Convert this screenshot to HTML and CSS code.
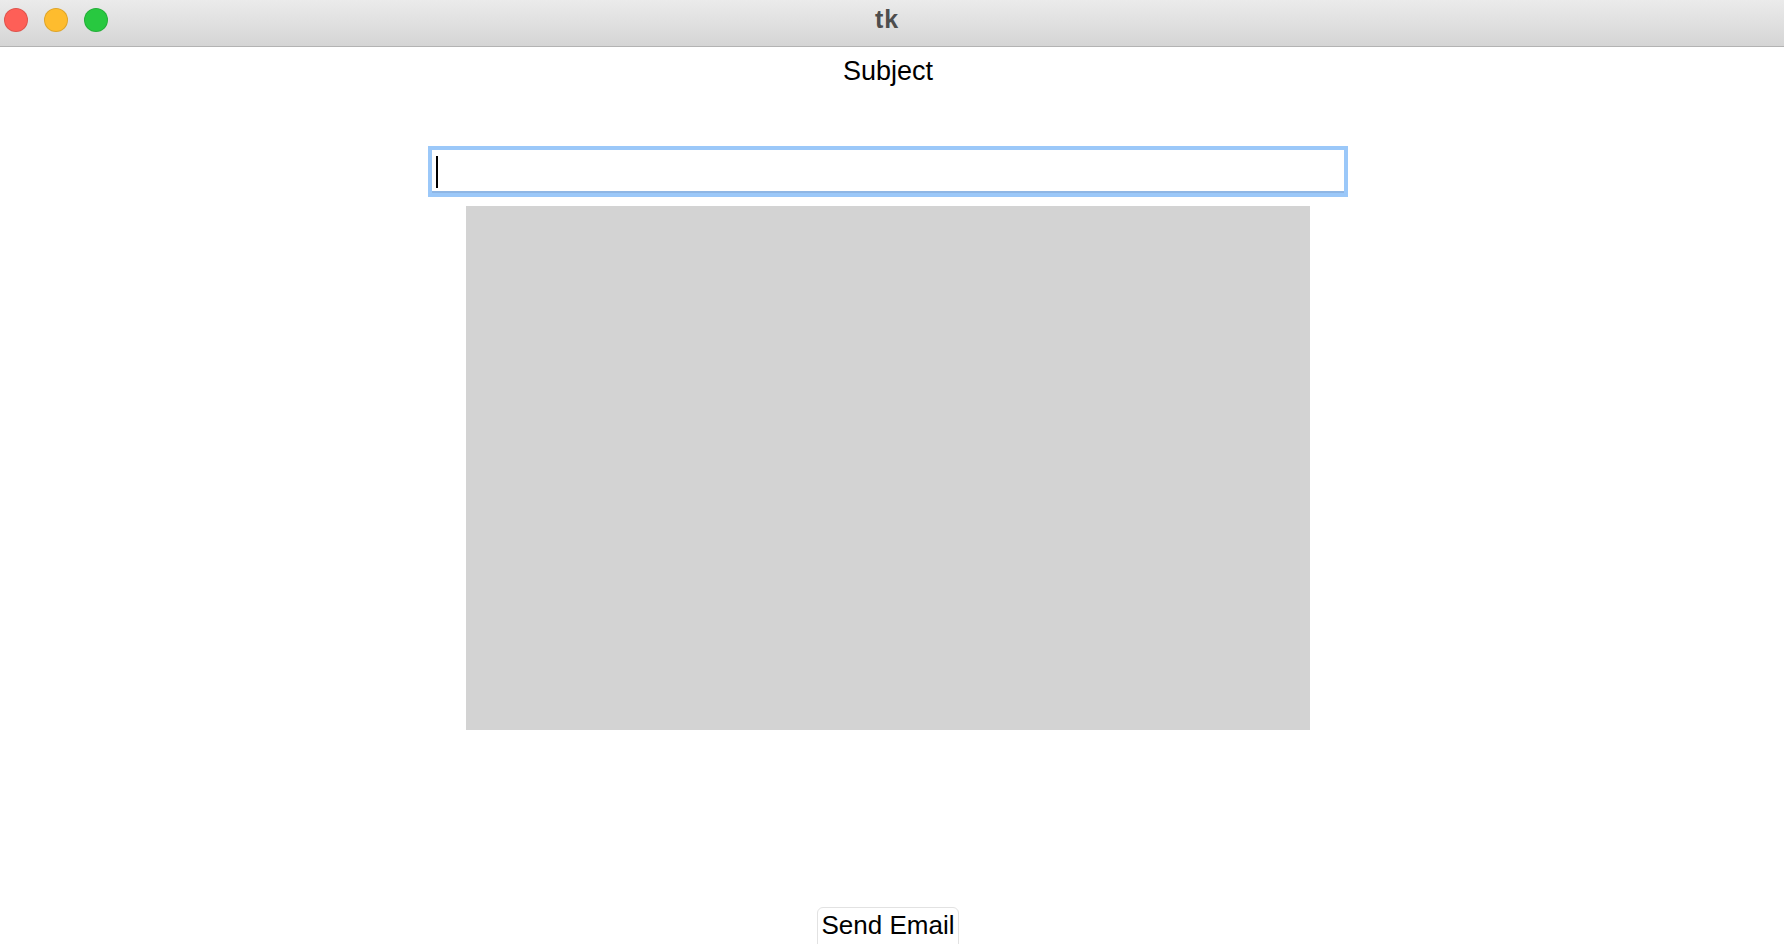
FILE: index.html
```html
<!DOCTYPE html>
<html lang="en">

<head>
  <meta charset="UTF-8" />
  <meta name="viewport" content="width=device-width, initial-scale=1.0" />
  <title>tk</title>
  <link rel="stylesheet" href="styles.css">
</head>

<body>

  <header class="titlebar">
    <div class="lights">
      <span class="light red"></span>
      <span class="light yellow"></span>
      <span class="light green"></span>
    </div>
    <div class="title">tk</div>
  </header>

  <main class="window">
    <label class="subject-label" for="subject">Subject</label>
    <div class="subject-box">
      <span class="caret"></span>
    </div>
    <div class="body-area"></div>
    <button class="send">Send Email</button>
  </main>

</body>

</html>
```

FILE: styles.css
```css
html,
body {
  height: 100%;
}

body {
  margin: 0;
  font-family: 'Liberation Sans', Arial, sans-serif;
  background: #fff;
  color: #000;
  overflow: hidden;
}

.titlebar {
  position: relative;
  height: 46px;
  padding-right: 10px;
  background: linear-gradient(#ebebeb, #d5d5d5);
  border-bottom: 1px solid #b3b3b3;
  display: flex;
  align-items: center;
  justify-content: center;
}

.lights {
  position: absolute;
  left: 4px;
  top: 8px;
  display: flex;
  gap: 16px;
}

.light {
  width: 22px;
  height: 22px;
  border-radius: 50%;
  border: 1px solid rgba(0, 0, 0, 0.12);
}

.light.red {
  background: #fe5f57;
}

.light.yellow {
  background: #febc2e;
}

.light.green {
  background: #28c840;
}

.title {
  font-weight: 700;
  font-size: 25px;
  letter-spacing: 1px;
  color: #4d4d4d;
  margin-top: -7px;
}

.window {
  display: flex;
  flex-direction: column;
  align-items: center;
  padding-right: 8px;
}

.subject-label {
  margin-top: 9px;
  font-size: 27px;
  line-height: 31px;
}

.subject-box {
  box-sizing: border-box;
  width: 920px;
  height: 51px;
  margin-top: 59px;
  border: 4px solid #9bc8f9;
  box-shadow: inset 0 -2px 0 #8fb6e4;
  background: #fff;
  padding: 6px 0 0 4px;
}

.caret {
  display: block;
  width: 2px;
  height: 32px;
  background: #000;
}

.body-area {
  width: 844px;
  height: 524px;
  margin-top: 9px;
  background: #d3d3d3;
}

.send {
  box-sizing: border-box;
  margin-top: 177px;
  font-family: 'Liberation Sans', Arial, sans-serif;
  font-size: 26px;
  white-space: nowrap;
  color: #000;
  background: #fff;
  border: 1px solid #e2e2e2;
  border-radius: 6px;
  padding: 2px 0 8px;
  width: 142px;
}
```
